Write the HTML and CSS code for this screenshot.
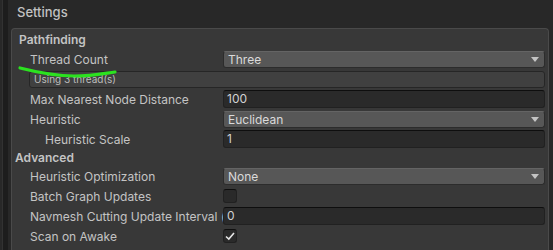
FILE: index.html
```html
<!DOCTYPE html>
<html lang="en">
<head>
    <meta charset="UTF-8">
    <title>Settings</title>
    <link rel="stylesheet" href="styles.css">
</head>
<body>
    <div class="window">
        <div class="edge"></div>
        <div class="inspector">
            <div class="header">Settings</div>
            <div class="panel">
                <div class="group-title">Pathfinding</div>

                <div class="row">
                    <div class="label">Thread Count</div>
                    <div class="popup">Three<span class="arrow"></span></div>
                </div>
                <div class="help-box">Using 3 thread(s)</div>

                <div class="row">
                    <div class="label">Max Nearest Node Distance</div>
                    <div class="field">100</div>
                </div>
                <div class="row">
                    <div class="label">Heuristic</div>
                    <div class="popup">Euclidean<span class="arrow"></span></div>
                </div>
                <div class="row">
                    <div class="label indent">Heuristic Scale</div>
                    <div class="field">1</div>
                </div>

                <div class="group-title advanced">Advanced</div>

                <div class="row">
                    <div class="label">Heuristic Optimization</div>
                    <div class="popup">None<span class="arrow"></span></div>
                </div>
                <div class="row">
                    <div class="label">Batch Graph Updates</div>
                    <div class="toggle"></div>
                </div>
                <div class="row">
                    <div class="label">Navmesh Cutting Update Interval (s)</div>
                    <div class="field">0</div>
                </div>
                <div class="row">
                    <div class="label">Scan on Awake</div>
                    <div class="toggle">
                        <svg width="12" height="12" viewBox="0 0 12 12">
                            <path d="M2 6.5 L4.8 9 L10 3" fill="none" stroke="#e6e6e6" stroke-width="1.6"/>
                        </svg>
                    </div>
                </div>
            </div>
        </div>
    </div>

    <!-- hand-drawn marker under the label -->
    <svg class="scribble" width="120" height="20" viewBox="0 0 120 20">
        <path d="M20 5 C 36 9, 54 13, 74 13 C 94 13, 106 10, 115 9" fill="none" stroke="#2be21f" stroke-width="3.2" stroke-linecap="round"/>
    </svg>
</body>
</html>
```

FILE: styles.css
```css
body {
    margin: 0;
    background-color: #282828;
    font-family: Inter, "Noto Sans", sans-serif;
    font-size: 12px;
    color: #c4c4c4;
    overflow: hidden;
}

.window {
    display: flex;
    height: 250px;
}

/* dark strip on the far left */
.edge {
    width: 5px;
    margin-left: 2px;
    margin-right: 3px;
    background-color: #1d1d1d;
    border-left: 1px solid #323232;
}

.inspector {
    width: 538px;
}

.header {
    height: 28px;
    line-height: 24px;
    padding-left: 6px;
    font-size: 13px;
    font-weight: 500;
    color: #c2c2c2;
}

.panel {
    height: 230px;
    padding-top: 2px;
    background-color: #383838;
    border: 1px solid #4a4a4a;
    border-bottom: none;
    border-radius: 4px 4px 0 0;
}

.group-title {
    height: 18px;
    line-height: 18px;
    padding-left: 7px;
    font-weight: 600;
    color: #c4c4c4;
}

.advanced {
    height: 17px;
    line-height: 17px;
    padding-left: 3px;
}

.row {
    display: flex;
    align-items: center;
    height: 20px;
    padding-right: 3px;
}

.label {
    width: 193px;
    flex-shrink: 0;
    padding-left: 18px;
    white-space: nowrap;
    overflow: hidden;
}

.indent {
    width: 178px;
    padding-left: 33px;
}

.popup {
    flex: 1;
    position: relative;
    height: 15px;
    line-height: 15px;
    padding-left: 4px;
    background-color: #575757;
    border: 1px solid #2c2c2c;
    border-top-color: #646464;
    border-radius: 3px;
    color: #dadada;
}

.arrow {
    position: absolute;
    right: 5px;
    top: 5px;
    width: 0;
    height: 0;
    border-left: 4px solid transparent;
    border-right: 4px solid transparent;
    border-top: 5px solid #c4c4c4;
}

.field {
    flex: 1;
    height: 16px;
    line-height: 16px;
    padding-left: 3px;
    background-color: #2a2a2a;
    border: 1px solid #212121;
    border-top-color: #0e0e0e;
    border-radius: 3px;
    color: #d2d2d2;
}

.help-box {
    height: 15px;
    line-height: 15px;
    margin: 2px 3px 1px 17px;
    padding-left: 4px;
    background-color: #404040;
    border: 1px solid #262626;
    border-radius: 3px;
    font-size: 10px;
    color: #bdbdbd;
}

.toggle {
    width: 12px;
    height: 12px;
    display: flex;
    align-items: center;
    justify-content: center;
    background-color: #2a2a2a;
    border: 1px solid #212121;
    border-top-color: #0e0e0e;
    border-radius: 3px;
}

.scribble {
    position: absolute;
    left: 0;
    top: 63px;
}
```
